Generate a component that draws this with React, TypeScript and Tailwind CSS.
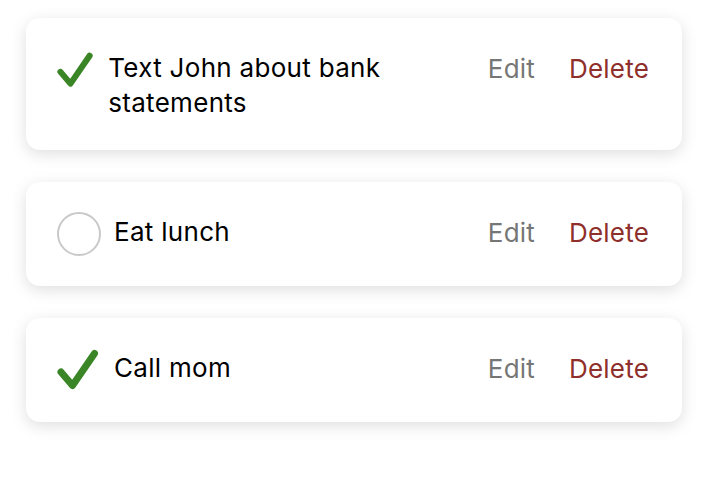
import React, {useState} from 'react';

interface Todo {
    id: number;
    text: string;
    done: boolean;
}

const initialTodos: Todo[] = [
    {id: 1, text: 'Text John about bank statements', done: true},
    {id: 2, text: 'Eat lunch', done: false},
    {id: 3, text: 'Call mom', done: true},
];

// Green tick for finished items, scales with its box
const CheckMark = () => (
    <svg className="w-full h-auto" viewBox="0 0 44 44" fill="none">
        <path
            d="M4 24 L15.5 37.5 L37.5 5.5"
            stroke="#3a8526"
            strokeWidth="7"
            strokeLinecap="round"
            strokeLinejoin="round"
        />
    </svg>
);

const App: React.FC = () => {
    const [todos, setTodos] = useState<Todo[]>(initialTodos);

    const toggle = (id: number) => {
        setTodos((prev) => prev.map((t) => (t.id === id ? {...t, done: !t.done} : t)));
    };

    const remove = (id: number) => {
        setTodos((prev) => prev.filter((t) => t.id !== id));
    };

    return (
        <div
            className="min-h-[482px] bg-white px-[26px] pt-[18px] pb-8 flex flex-col gap-8"
            style={{fontFamily: 'Inter, "Noto Sans", sans-serif'}}
        >
            {todos.map((todo) => (
                <div
                    key={todo.id}
                    className="flex items-start bg-white rounded-[14px] pl-[31px] pr-[33px] py-[30px] shadow-[0_4px_16px_rgba(0,0,0,0.13)]"
                >
                    <button
                        className="w-[44px] h-[44px] flex items-center mr-[13px]"
                        onClick={() => toggle(todo.id)}
                    >
                        {todo.done ? (
                            <CheckMark/>
                        ) : (
                            <span className="block w-[44px] h-[44px] rounded-full border-2 border-[#c9c9c9]"/>
                        )}
                    </button>

                    <p className="flex-auto mt-[2px] text-[26px] leading-[35px] tracking-[0.3px] text-black">
                        {todo.text}
                    </p>

                    <div className="h-[44px] flex items-center gap-[34px] text-[26px] tracking-[0.2px] shrink-0 ml-4 -mt-[2px]">
                        <button className="text-[#767676]">Edit</button>
                        <button className="text-[#8f2f2b]" onClick={() => remove(todo.id)}>
                            Delete
                        </button>
                    </div>
                </div>
            ))}
        </div>
    );
};

export default App;
